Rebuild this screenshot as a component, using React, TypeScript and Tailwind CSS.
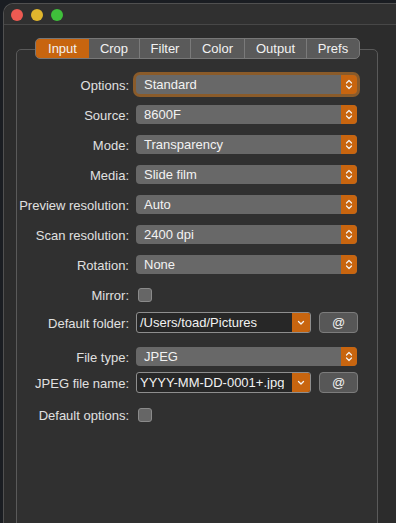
import React from "react";

const font = { fontFamily: '"Liberation Sans", Arial, sans-serif' };

function Stepper() {
  return (
    <div className="w-[16px] h-full bg-[#c8650f] rounded-r-[4px] flex items-center justify-center">
      <svg width="8" height="13" viewBox="0 0 8 13" fill="none">
        <path d="M1.5 5 L4 2.5 L6.5 5" stroke="#f4f4f4" strokeWidth="1.2" strokeLinecap="round" strokeLinejoin="round" />
        <path d="M1.5 8 L4 10.5 L6.5 8" stroke="#f4f4f4" strokeWidth="1.2" strokeLinecap="round" strokeLinejoin="round" />
      </svg>
    </div>
  );
}

function Popup({ value, focus }: { value: string; focus?: boolean }) {
  return (
    <div
      className={
        "w-[221px] h-[19px] rounded-[4px] bg-[#686868] flex items-center justify-between " +
        (focus ? "ring-[3px] ring-[#8a5b2a]" : "")
      }
    >
      <span className="pl-[8px] text-[13px] text-[#f2f2f2] leading-none">{value}</span>
      <Stepper />
    </div>
  );
}

function Combo({ value }: { value: string }) {
  return (
    <div className="flex items-center gap-[8px]">
      <div className="w-[175px] h-[21px] rounded-[3px] border border-[#8e8e8e] bg-[#272727] flex items-center justify-between overflow-hidden">
        <span className="pl-[3px] text-[13px] text-[#f2f2f2] leading-none whitespace-nowrap overflow-hidden">{value}</span>
        <div className="w-[18px] h-full bg-[#c8650f] flex items-center justify-center shrink-0">
          <svg width="8" height="6" viewBox="0 0 8 6" fill="none">
            <path d="M1.5 1.5 L4 4 L6.5 1.5" stroke="#f4f4f4" strokeWidth="1.3" strokeLinecap="round" strokeLinejoin="round" />
          </svg>
        </div>
      </div>
      <div className="w-[39px] h-[21px] rounded-[4px] border border-[#7c7c7c] bg-[#575757] flex items-center justify-center text-[13px] text-[#f2f2f2] leading-none">
        @
      </div>
    </div>
  );
}

function Checkbox() {
  return <div className="ml-[2px] w-[14px] h-[14px] rounded-[3px] border border-[#8a8a8a] bg-[#666666]" />;
}

function Row({ label, children, cls }: { label: string; children: React.ReactNode; cls: string }) {
  return (
    <div className={"flex items-center " + cls}>
      <div className="w-[112px] pt-[1px] text-right text-[13px] text-[#e0e0e0] leading-none whitespace-nowrap">{label}</div>
      <div className="ml-[7px]">{children}</div>
    </div>
  );
}

const tabs = [
  { name: "Input", w: "w-[53px]" },
  { name: "Crop", w: "w-[50px]" },
  { name: "Filter", w: "w-[51px]" },
  { name: "Color", w: "w-[54px]" },
  { name: "Output", w: "w-[62px]" },
  { name: "Prefs", w: "w-[53px]" },
];

export default function App() {
  return (
    <div className="w-[396px] h-[523px] bg-[#1a1d22] pl-[3px] pt-[3px] overflow-hidden flex" style={font}>
      <div className="flex-1 h-[540px] bg-[#2c2c2c] border-l border-t border-[#505050] rounded-tl-[10px] flex flex-col">
        <div className="h-[21px] bg-[#303030] rounded-tl-[10px] border-b border-[#474747] flex items-center gap-[8px] pl-[7px] pt-[2px]">
          <div className="w-[12px] h-[12px] rounded-full bg-[#ec5a52]" />
          <div className="w-[12px] h-[12px] rounded-full bg-[#e0b62d]" />
          <div className="w-[12px] h-[12px] rounded-full bg-[#3fbf3b]" />
        </div>
        <div className="relative mt-[24px] ml-[12px] w-[362px] h-[500px] border border-[#5a5a5a] rounded-[5px] bg-[#303030] pt-[20px]">
          <div className="absolute top-[-12px] left-[18px] h-[21px] flex rounded-[5px] border border-[#777777] overflow-hidden bg-[#5a5a5a]">
            {tabs.map((t, i) => (
              <div
                key={t.name}
                className={
                  t.w +
                  " h-full flex items-center justify-center text-[13px] leading-none text-[#f2f2f2] " +
                  (i === 0 ? "bg-[#c8650f] " : "") +
                  (i > 1 ? "border-l border-[#7a7a7a]" : "")
                }
              >
                {t.name}
              </div>
            ))}
          </div>
          <Row label="Options:" cls="h-[30px]">
            <Popup value="Standard" focus />
          </Row>
          <Row label="Source:" cls="h-[30px]">
            <Popup value="8600F" />
          </Row>
          <Row label="Mode:" cls="h-[30px]">
            <Popup value="Transparency" />
          </Row>
          <Row label="Media:" cls="h-[30px]">
            <Popup value="Slide film" />
          </Row>
          <Row label="Preview resolution:" cls="h-[30px]">
            <Popup value="Auto" />
          </Row>
          <Row label="Scan resolution:" cls="h-[30px]">
            <Popup value="2400 dpi" />
          </Row>
          <Row label="Rotation:" cls="h-[30px]">
            <Popup value="None" />
          </Row>
          <Row label="Mirror:" cls="h-[30px]">
            <Checkbox />
          </Row>
          <Row label="Default folder:" cls="h-[26px]">
            <Combo value="/Users/toad/Pictures" />
          </Row>
          <Row label="File type:" cls="h-[20px] mt-[11px]">
            <Popup value="JPEG" />
          </Row>
          <Row label="JPEG file name:" cls="h-[22px] mt-[5px]">
            <Combo value="YYYY-MM-DD-0001+.jpg" />
          </Row>
          <Row label="Default options:" cls="h-[14px] mt-[14px]">
            <Checkbox />
          </Row>
        </div>
      </div>
    </div>
  );
}
